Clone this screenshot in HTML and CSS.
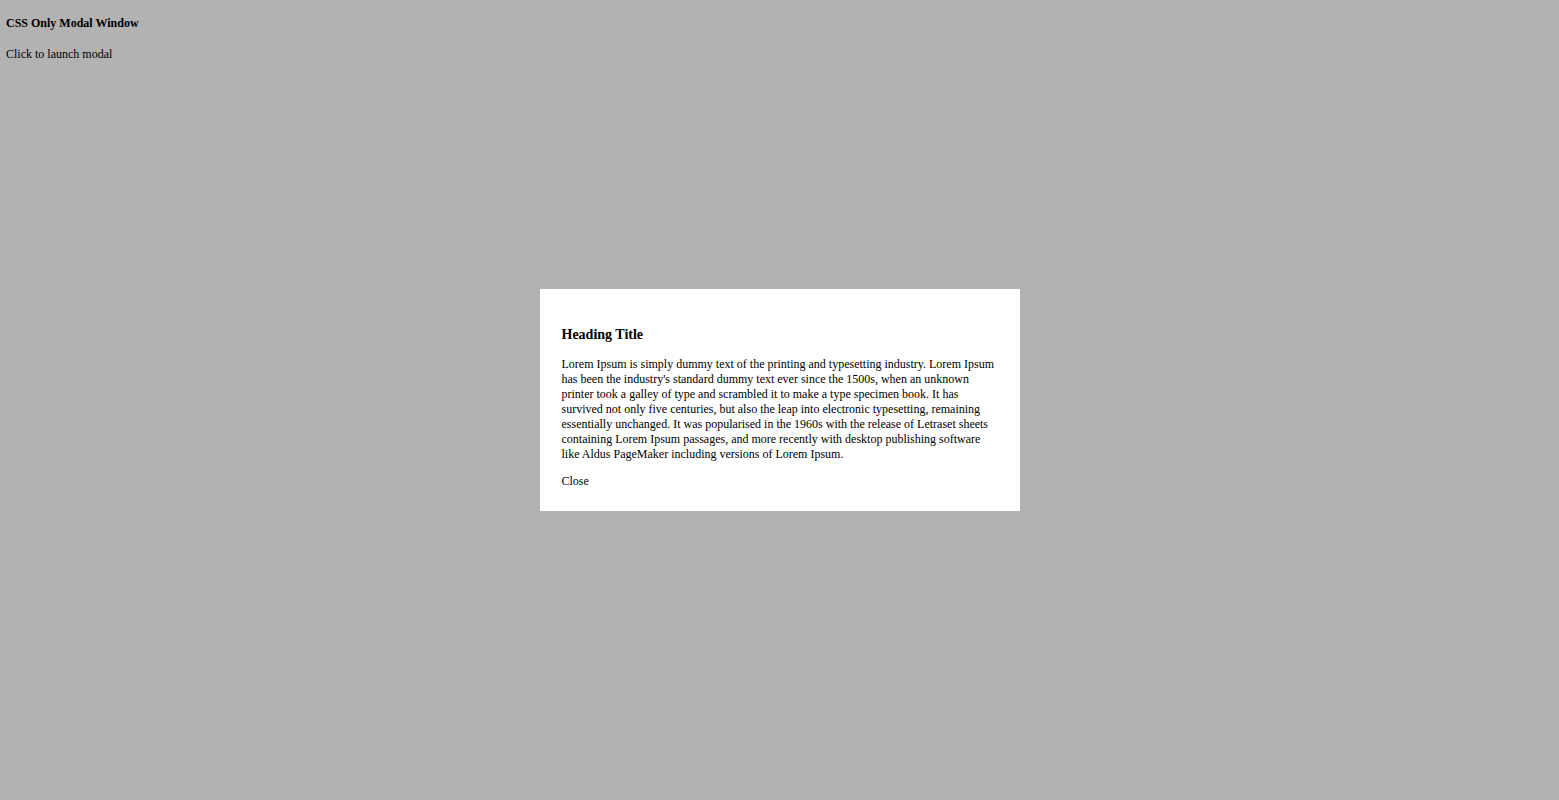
FILE: index.html
```html
<!DOCTYPE html>
<html>
<head>
<meta charset="utf-8">
<title>CSS Only Modal Window</title>
<link rel="stylesheet" href="styles.css">
</head>
<body>
<div class="page">
  <h4 class="page-title">CSS Only Modal Window</h4>
  <p class="launch">Click to launch modal</p>
</div>
<div class="overlay">
  <div class="modal">
    <h3 class="modal-title">Heading Title</h3>
    <p class="modal-text">Lorem Ipsum is simply dummy text of the printing and typesetting industry. Lorem Ipsum has been the industry's standard dummy text ever since the 1500s, when an unknown printer took a galley of type and scrambled it to make a type specimen book. It has survived not only five centuries, but also the leap into electronic typesetting, remaining essentially unchanged. It was popularised in the 1960s with the release of Letraset sheets containing Lorem Ipsum passages, and more recently with desktop publishing software like Aldus PageMaker including versions of Lorem Ipsum.</p>
    <div class="close">Close</div>
  </div>
</div>
</body>
</html>
```
FILE: styles.css
```css
html, body {
  margin: 0;
  padding: 0;
  height: 100%;
}
body {
  background: #ffffff;
  font-family: "Liberation Serif", "Times New Roman", serif;
  font-size: 12px;
  line-height: 15px;
  color: #000;
}
.page {
  padding: 16px 6px;
}
.page-title {
  margin: 0 0 16px;
  font-size: 12px;
  font-weight: bold;
}
.launch {
  margin: 0;
}
.overlay {
  position: fixed;
  inset: 0;
  background: rgba(0, 0, 0, 0.3);
  display: flex;
  align-items: center;
  justify-content: center;
}
.modal {
  width: 480px;
  box-sizing: border-box;
  padding: 22px 22px 22px;
  background: #ffffff;
}
.modal-title {
  margin: 15px 0 14px;
  font-size: 14px;
  line-height: 17px;
  font-weight: bold;
}
.modal-text {
  margin: 0 0 12px;
}
.close {
  cursor: pointer;
}
```
